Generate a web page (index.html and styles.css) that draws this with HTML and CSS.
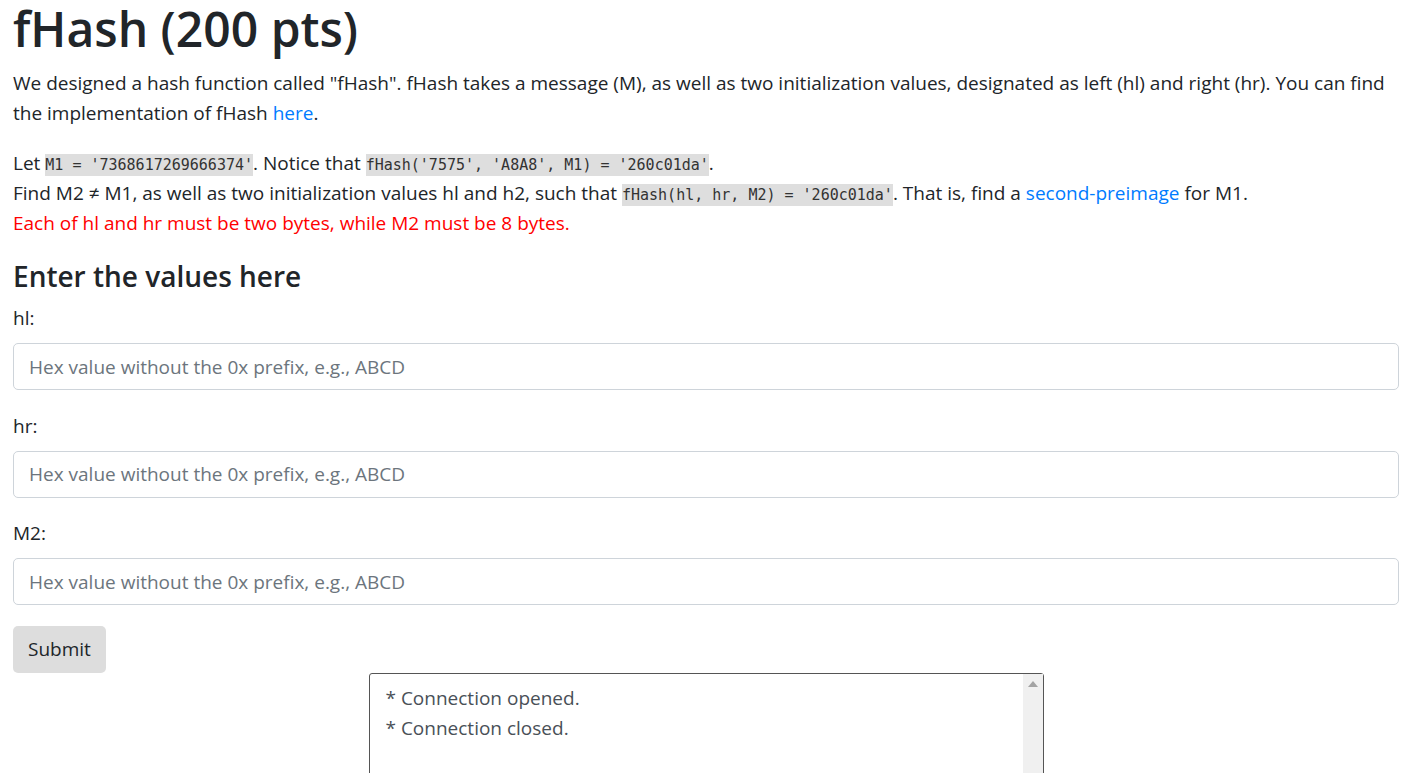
FILE: index.html
```html
<!DOCTYPE html>
<html lang="en">
<head>
<meta charset="utf-8">
<title>fHash</title>
<link rel="stylesheet" href="styles.css">
</head>
<body>
<div class="page">
  <h1 class="title">fHash (200 pts)</h1>
  <p class="para">We designed a hash function called "fHash". fHash takes a message (M), as well as two initialization values, designated as left (hl) and right (hr). You can find the implementation of fHash <a class="link" href="#">here</a>.</p>
  <p class="para">Let <code class="code">M1 = '7368617269666374'</code>. Notice that <code class="code">fHash('7575', 'A8A8', M1) = '260c01da'</code>.<br>Find M2 &ne; M1, as well as two initialization values hl and h2, such that <code class="code">fHash(hl, hr, M2) = '260c01da'</code>. That is, find a <a class="link" href="#">second-preimage</a> for M1.<br><span class="warn">Each of hl and hr must be two bytes, while M2 must be 8 bytes.</span></p>
  <h4 class="subtitle">Enter the values here</h4>
  <form class="form">
    <div class="group">
      <label class="label" for="hl">hl:</label>
      <input class="field" id="hl" type="text" placeholder="Hex value without the 0x prefix, e.g., ABCD">
    </div>
    <div class="group">
      <label class="label" for="hr">hr:</label>
      <input class="field" id="hr" type="text" placeholder="Hex value without the 0x prefix, e.g., ABCD">
    </div>
    <div class="group">
      <label class="label" for="m2">M2:</label>
      <input class="field" id="m2" type="text" placeholder="Hex value without the 0x prefix, e.g., ABCD">
    </div>
    <button class="submit" type="button">Submit</button>
  </form>
  <div class="log">
    <div class="log-text">* Connection opened.<br>* Connection closed.</div>
    <div class="log-bar"><span class="arrow"></span></div>
  </div>
</div>
</body>
</html>
```
FILE: styles.css
```css
html, body {
  margin: 0;
  padding: 0;
  background: #fff;
}
body {
  font-family: "Open Sans", "Noto Sans", sans-serif;
  font-size: 19px;
  line-height: 30px;
  color: #212529;
}
.page {
  padding: 0 16px 0 13px;
}
.title {
  font-size: 48px;
  font-weight: 600;
  line-height: 58px;
  margin: 0 0 10px;
}
.para {
  margin: 0 0 20px;
}
.link {
  color: #007bff;
  text-decoration: none;
}
.code {
  font-family: "DejaVu Sans Mono", "Liberation Mono", monospace;
  font-size: 15px;
  line-height: 1;
  background: #dedede;
  color: #333;
  padding: 2px 0;
}
.warn {
  color: #ff0000;
}
.subtitle {
  font-size: 28px;
  font-weight: 600;
  line-height: 36px;
  margin: 0 0 9px;
}
.form {
  margin: 0;
}
.group {
  display: flex;
  flex-direction: column;
  margin-bottom: 20.5px;
}
.label {
  margin-bottom: 10px;
}
.field {
  box-sizing: border-box;
  height: 47px;
  width: 100%;
  padding: 0 15px;
  border: 1px solid #ced4da;
  border-radius: 5px;
  font-family: inherit;
  font-size: 19px;
  color: #495057;
  background: #fff;
  outline: none;
}
.field::placeholder {
  color: #6c757d;
}
.submit {
  display: block;
  height: 47px;
  padding: 0 15px;
  border: none;
  border-radius: 5px;
  background: #dddddd;
  color: #212529;
  font-family: inherit;
  font-size: 19px;
}
.log {
  display: flex;
  width: 675px;
  height: 150px;
  margin: 0 auto;
  box-sizing: border-box;
  border: 1px solid #555;
  border-radius: 3px;
  background: #fff;
}
.log-text {
  flex: 1;
  padding: 9px 16px;
  color: #495057;
}
.log-bar {
  width: 20px;
  background: #f0f0f0;
  display: flex;
  justify-content: center;
  padding-top: 7px;
}
.arrow {
  width: 0;
  height: 0;
  border-left: 5px solid transparent;
  border-right: 5px solid transparent;
  border-bottom: 6px solid #a3a3a3;
}
```
